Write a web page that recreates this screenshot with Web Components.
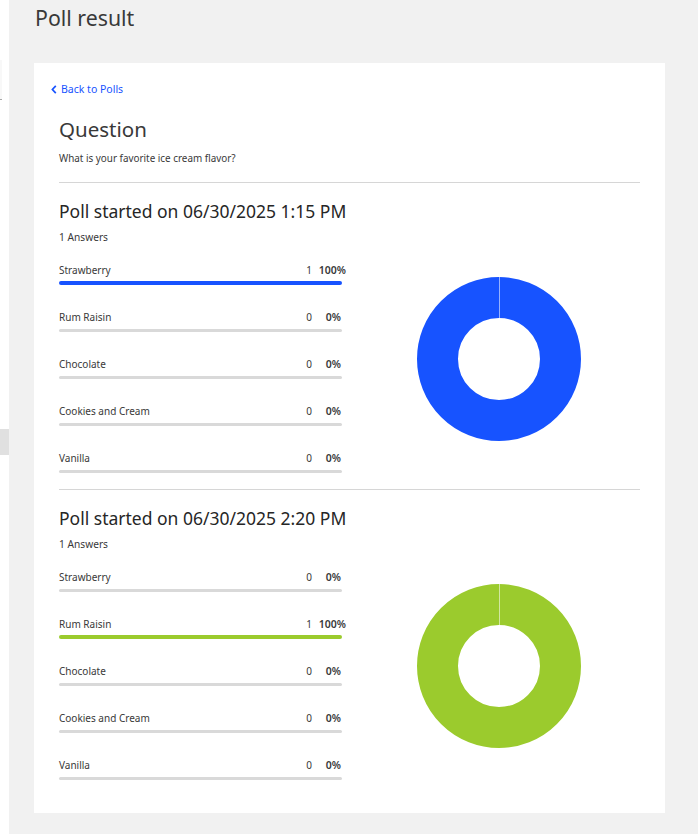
<!DOCTYPE html>
<html><head><meta charset="utf-8"><style>
html,body{margin:0;padding:0;height:834px;overflow:hidden;background:#f1f1f1}
body{font-family:"Noto Sans","Liberation Sans",sans-serif;color:#262626}
</style></head><body>
<poll-page>
  <span slot="title">Poll result</span>
  <poll-section date="06/30/2025 1:15 PM" color="#1753ff" winner="0"></poll-section>
  <poll-section date="06/30/2025 2:20 PM" color="#9bcb2d" winner="1"></poll-section>
</poll-page>
<script>
class PollPage extends HTMLElement{constructor(){super();this.attachShadow({mode:'open'}).innerHTML=`<style>
:host{display:flex;height:834px;overflow:hidden}
.side{width:9px;flex:none;background:#fff;display:flex;flex-direction:column}
.a{height:39px;margin-top:60px;width:2px;border-bottom:1px solid #a8a8a8;background:#f8f8f8;flex:none}
.b{height:26px;margin-top:329px;background:#e0e0e0;flex:none}
main{flex:1;min-width:0;padding:0 33px 0 25px}
h1{margin:0;font-weight:400;font-size:21.3px;line-height:36px;color:#393939;padding-left:1px;height:63px}
.card{background:#fff;height:750px;box-sizing:border-box;padding:19px 25px 0 25px}
a{display:flex;align-items:center;gap:4px;margin-left:-8px;color:#1753ff;font-size:10.5px;line-height:14px;height:14px;text-decoration:none}
h2{margin:19px 0 0;font-weight:400;font-size:20.5px;line-height:28px;color:#393939}
p{margin:8px 0 0;font-size:9.9px;line-height:14px;padding-bottom:17px;color:#393939}
</style>
<div class="side"><div class="a"></div><div class="b"></div></div>
<main><h1><slot name="title"></slot></h1>
<div class="card"><a href="#"><svg width="6" height="9" viewBox="0 0 6 9"><path d="M4.8 .8 1.4 4.5l3.4 3.7" fill="none" stroke="#1753ff" stroke-width="1.7"/></svg>Back to Polls</a>
<h2>Question</h2><p>What is your favorite ice cream flavor?</p><slot></slot></div></main>`}}
customElements.define('poll-page',PollPage);

class PollRow extends HTMLElement{constructor(){super();const z=this.getAttribute('pct')==='0%';this.attachShadow({mode:'open'}).innerHTML=`<style>
:host{display:block;height:47px;width:283px}
.t{display:flex;font-size:10px;line-height:14px;height:14px;color:#393939;white-space:nowrap}
.n{flex:1}
.p{width:${z?29:34}px;margin-right:${z?1:-4}px;text-align:right;font-weight:600;flex:none;font-size:10.5px}
.bar{height:${z?3:4}px;border-radius:2px;background:var(--bar,#d9d9d9);margin-top:${z?5:4}px}
</style><div class="t"><span class="n"><slot></slot></span><span>${this.getAttribute('count')}</span><span class="p">${this.getAttribute('pct')}</span></div><div class="bar"></div>`;
if(this.getAttribute('color'))this.style.setProperty('--bar',this.getAttribute('color'));}}
customElements.define('poll-row',PollRow);

class PollDonut extends HTMLElement{constructor(){super();const c=this.getAttribute('color');this.attachShadow({mode:'open'}).innerHTML=`<style>
:host{display:block;width:164px;height:164px}svg{display:block}</style>
<svg width="164" height="164" viewBox="0 0 164 164"><circle cx="82" cy="82" r="61.5" fill="none" stroke="${c}" stroke-width="41"/><path d="M82.5 0v41" stroke="#fff" stroke-opacity=".55" stroke-width="1"/></svg>`}}
customElements.define('poll-donut',PollDonut);

const OPTS=['Strawberry','Rum Raisin','Chocolate','Cookies and Cream','Vanilla'];
class PollSection extends HTMLElement{constructor(){super();const w=+this.getAttribute('winner'),col=this.getAttribute('color');
this.attachShadow({mode:'open'}).innerHTML=`<style>
:host{display:block;border-top:1px solid #d6d6d6;height:306px;box-sizing:content-box;width:581px}
h3{margin:0;padding-top:16px;font-weight:400;font-size:17.5px;line-height:24px;color:#262626;white-space:nowrap}
.a{font-size:10.2px;line-height:14px;margin-top:7px;color:#393939}
.g{display:flex;margin-top:19px}
.d{margin:0 0 0 75px;padding-top:14px}
.l{flex:none;width:283px}
</style><h3>Poll started on ${this.getAttribute('date')}</h3><div class="a">1 Answers</div>
<div class="g"><div class="l">${OPTS.map((o,i)=>`<poll-row count="${i==w?1:0}" pct="${i==w?'100%':'0%'}" ${i==w?`color="${col}"`:''}>${o}</poll-row>`).join('')}</div>
<div class="d"><poll-donut color="${col}"></poll-donut></div></div>`}}
customElements.define('poll-section',PollSection);
</script>
</body></html>
